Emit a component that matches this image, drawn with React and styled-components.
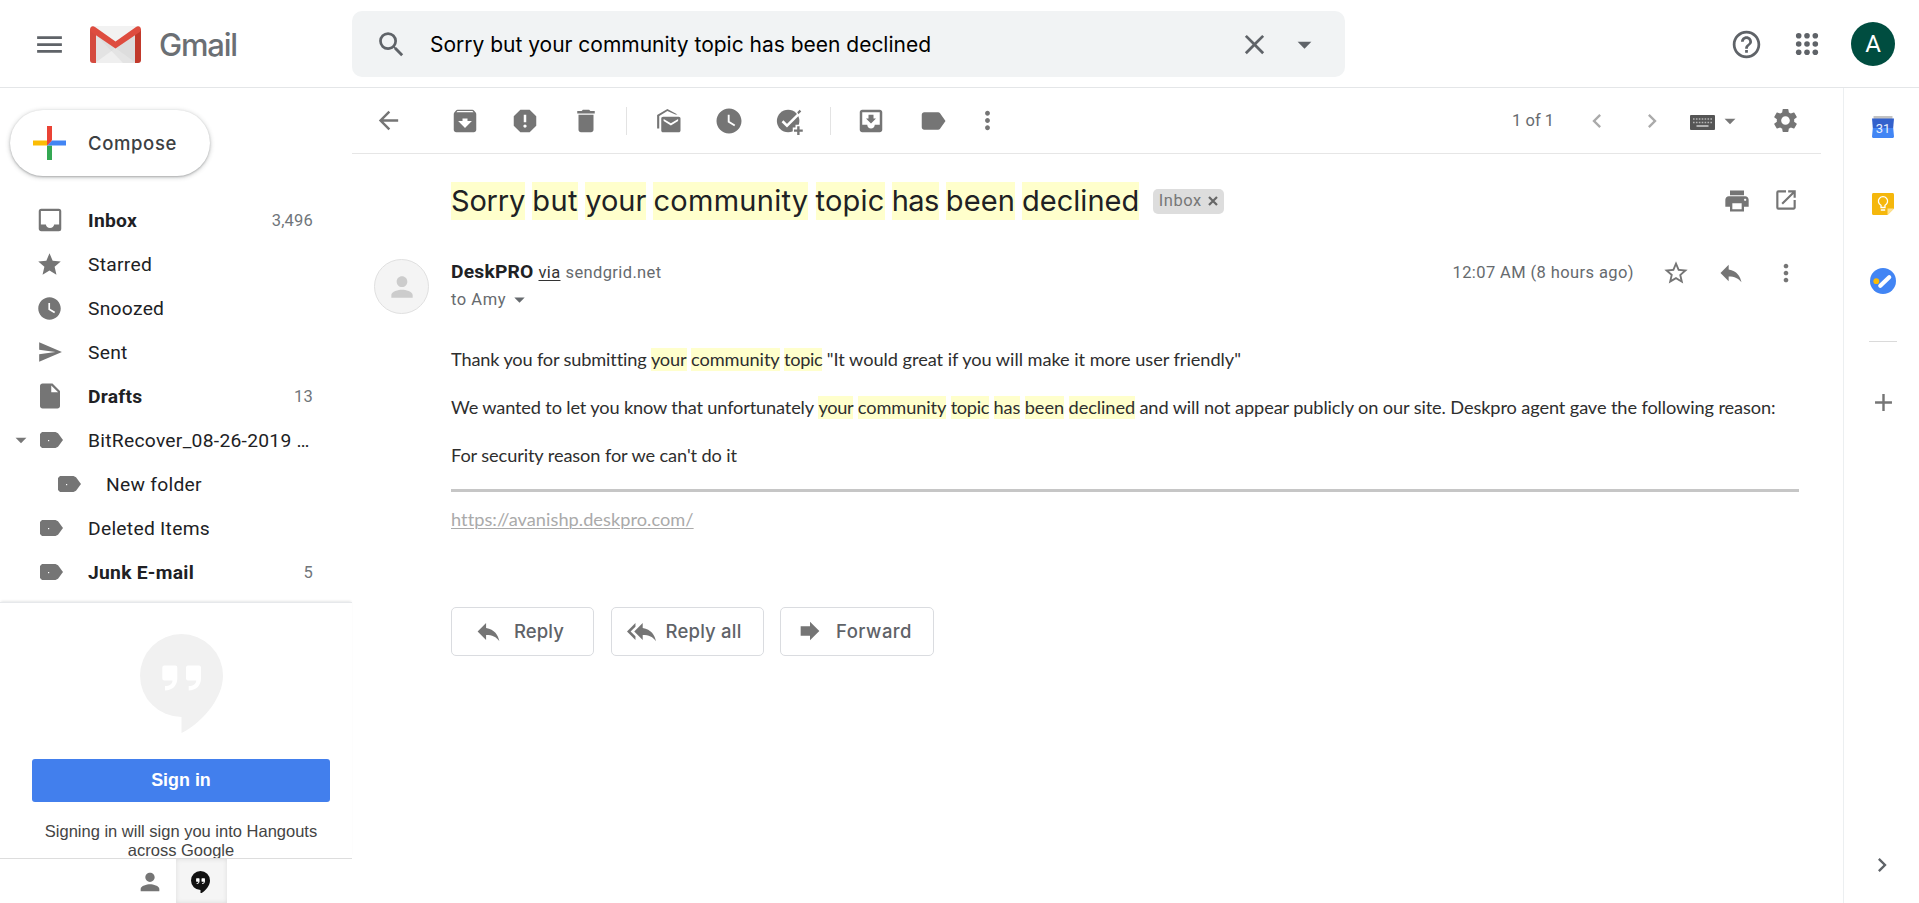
import React, { useLayoutEffect, useRef, useState } from 'react';
import styled, { createGlobalStyle } from 'styled-components';
import {
  MdMenu, MdSearch, MdClose, MdArrowDropDown, MdHelpOutline, MdArrowBack, MdArchive, MdReport,
  MdDelete, MdWatchLater, MdMoveToInbox, MdLabel, MdMoreVert, MdChevronLeft, MdChevronRight,
  MdSettings, MdPrint, MdOpenInNew, MdStarBorder, MdReply, MdReplyAll, MdForward,
  MdStar, MdSend, MdInsertDriveFile, MdPerson, MdAdd,
} from 'react-icons/md';

const sans = `Roboto, "Liberation Sans", sans-serif`;
const display = `Inter, Roboto, sans-serif`;
const humanist = `Lato, "Open Sans", sans-serif`;

const Global = createGlobalStyle`
  * { box-sizing: border-box; }
  html, body { margin: 0; background: #fff; }
  body { font-family: ${sans}; overflow: hidden; }
  svg { display: block; flex: none; }
`;

/* Spreads a run of text over a given width through letter-spacing. */
const Run = styled.span`
  display: inline-block;
  white-space: nowrap;
  flex: none;
`;
function Fit({ width, children, as: Tag = Run }) {
  const ref = useRef(null);
  const [spacing, setSpacing] = useState(0);
  useLayoutEffect(() => {
    const natural = ref.current.getBoundingClientRect().width;
    setSpacing((width - natural) / String(children).length);
  }, [width, children]);
  return <Tag ref={ref} style={{ letterSpacing: `${spacing}px` }}>{children}</Tag>;
}

const Page = styled.div`
  width: 100vw;
  height: 903px;
  display: flex;
  flex-direction: column;
  overflow: hidden;
`;

/* Header */
const Header = styled.header`
  height: 88px;
  flex: none;
  display: flex;
  align-items: center;
  border-bottom: 1px solid #e4e6e8;
  color: #5f6368;
  padding: 1px 24px 0 33px;
`;
const Brand = styled.div`
  display: flex;
  align-items: center;
  width: 319px;
  & > svg:first-child { margin-right: 24px; }
`;
const BrandName = styled.div`
  margin: 2px 0 0 18px;
  font: 500 31px/40px ${display};
  color: #6b6f74;
`;
const SearchBox = styled.div`
  width: 993px;
  height: 66px;
  border-radius: 10px;
  background: #f1f3f4;
  display: flex;
  align-items: center;
  padding: 0 24px 0 23px;
`;
const Query = styled.div`
  flex: 1;
  margin: 2px 0 0 22px;
  font: 400 21px/30px ${display};
  color: #000;
`;
const SearchActions = styled.div`
  display: flex;
  gap: 17px;
`;
const HeaderActions = styled.div`
  margin-left: auto;
  display: flex;
  align-items: center;
`;
const AppsSlot = styled.div`
  margin: 0 32px;
`;
const Account = styled.div`
  width: 44px;
  height: 44px;
  border-radius: 50%;
  background: #004d40;
  color: #fff;
  font: 400 24px/45px ${sans};
  text-align: center;
`;

const Columns = styled.div`
  flex: 1;
  min-height: 0;
  display: flex;
`;

/* Sidebar */
const Sidebar = styled.aside`
  width: 352px;
  flex: none;
  display: flex;
  flex-direction: column;
`;
const Compose = styled.div`
  width: 200px;
  height: 66px;
  margin: 22px 0 22px 10px;
  flex: none;
  border-radius: 33px;
  background: #fff;
  box-shadow: 0 1px 2px rgba(60, 64, 67, 0.3), 0 1px 4px 1px rgba(60, 64, 67, 0.2);
  display: flex;
  align-items: center;
  padding: 0 0 1px 23px;
  gap: 22px;
  font: 500 18.5px/30px ${display};
  color: #3c4043;
`;
const Nav = styled.nav`
  height: 404px;
  flex: none;
`;
const NavItem = styled.div`
  height: 44px;
  display: flex;
  align-items: center;
  padding: 0 39px 0 ${(p) => (p.$nested ? 52 : 34)}px;
  font-size: 19.25px;
  letter-spacing: 0.275px;
  font-weight: ${(p) => (p.$unread ? 700 : 400)};
  color: #202124;
`;
const NavIcon = styled.span`
  width: 32px;
  height: 30px;
  display: flex;
  align-items: center;
  justify-content: center;
  padding: ${(p) => (p.$folder ? '0 0 0 3px' : '0 1px 0 0')};
  color: #757575;
`;
const NavText = styled.span`
  flex: 1;
  margin-left: 22px;
  white-space: nowrap;
`;
const NavCount = styled.span`
  font-size: 16.5px;
  font-weight: 400;
  letter-spacing: 0.2px;
  color: #70757a;
`;
const NavCaret = styled.span`
  width: 26px;
  margin: 0 0 0 -26px;
  color: #777;
`;

const Chat = styled.section`
  flex: 1;
  min-height: 0;
  display: flex;
  flex-direction: column;
  align-items: center;
  border-top: 1px solid #e6e8eb;
  box-shadow: 0 -2px 2px -1px rgba(60, 64, 67, 0.12);
  padding: 31px 0 0 10px;
  overflow: hidden;
`;
const SignIn = styled.div`
  width: 298px;
  height: 43px;
  flex: none;
  margin: 26px 0 20px;
  border-radius: 3px;
  background: #427fed;
  color: #fff;
  font: 700 17.9px/43px "Liberation Sans", Arial, sans-serif;
  text-align: center;
`;
const SignInNote = styled.div`
  width: 290px;
  font: 400 16.5px/19.2px "Liberation Sans", Arial, sans-serif;
  text-align: center;
  color: #444;
`;
const ChatTabs = styled.div`
  height: 45px;
  flex: none;
  border-top: 1px solid #ddd;
  background: #fff;
  display: flex;
  padding-left: 125px;
`;
const ChatTab = styled.div`
  width: 51px;
  display: flex;
  justify-content: center;
  align-items: center;
  padding: 2px 2px 0 0;
  color: #757575;
  background: ${(p) => (p.$active ? '#f5f5f5' : 'none')};
  box-shadow: ${(p) => (p.$active ? 'inset 0 0 5px rgba(0,0,0,0.1)' : 'none')};
`;

/* Message pane */
const Main = styled.main`
  flex: 1;
  min-width: 0;
`;
const Toolbar = styled.div`
  height: 66px;
  margin-right: 22px;
  border-bottom: 1px solid #e6e6e6;
  display: flex;
  align-items: center;
  padding-left: 21.5px;
  color: #757575;
`;
const ToolGroup = styled.div`
  display: flex;
  gap: ${(p) => p.$gap || 30.5}px;
  margin-left: ${(p) => p.$left}px;
`;
const ToolDivider = styled.div`
  width: 1px;
  height: 28px;
  background: #e3e3e3;
  margin-left: 25px;
`;
const Paging = styled.div`
  margin-left: auto;
  display: flex;
  align-items: center;
  padding-right: 21px;
`;
const PageCount = styled.span`
  font-size: 16.5px;
  color: #666a6e;
  margin-right: 29px;
`;
const Pagers = styled.div`
  display: flex;
  gap: 27px;
  color: #aaa;
`;
const InputTools = styled.div`
  display: flex;
  align-items: center;
  margin: 0 28px 0 24px;
  color: #555;
  & > svg:first-child { margin-top: 4px; }
  & > svg + svg { margin-left: 2px; color: #777; }
`;

const SubjectRow = styled.div`
  height: 94px;
  padding: 0 44px 0 99px;
  display: flex;
  align-items: center;
`;
const Subject = styled.h1`
  margin: 0;
  display: flex;
  gap: 7.15px;
  font: 400 29px/38px ${display};
  color: #202124;
`;
const Mark = styled.mark`
  display: inline-block;
  white-space: nowrap;
  flex: none;
  background: #ffffcc;
  color: inherit;
`;
const Chip = styled.div`
  width: 71px;
  height: 25px;
  margin-left: 14px;
  border-radius: 5px;
  background: #ddd;
  color: #777;
  display: flex;
  align-items: center;
  padding: 0 0 1px 5.5px;
  gap: 6px;
  font-size: 16.5px;
`;
const RowActions = styled.div`
  margin-left: auto;
  display: flex;
  gap: ${(p) => p.$gap}px;
  color: #757575;
`;

const SenderRow = styled.div`
  height: 68px;
  padding: 11px 43px 0 22px;
  display: flex;
  align-items: flex-start;
`;
const Photo = styled.div`
  width: 55px;
  height: 55px;
  border-radius: 50%;
  border: 1px solid #e0e0e0;
  background: #f4f4f4;
  color: #ccc;
  display: flex;
  align-items: center;
  justify-content: center;
`;
const Sender = styled.div`
  margin: -1px 0 0 22px;
`;
const FromLine = styled.div`
  display: flex;
  align-items: baseline;
  gap: 5px;
  font-size: 16.5px;
  line-height: 27px;
  color: #666a6e;
  b { font-size: 19.25px; color: #202124; }
`;
const Via = styled(Run)`
  color: #333;
  text-decoration: underline;
  text-decoration-thickness: 1px;
  text-underline-offset: 2px;
`;
const ToLine = styled.div`
  display: flex;
  align-items: center;
  gap: 1px;
  font-size: 16.5px;
  line-height: 27px;
  color: #666a6e;
`;
const SentAt = styled.span`
  line-height: 28px;
  font-size: 16.5px;
  color: #666a6e;
  white-space: nowrap;
  margin-right: 1px;
`;

const Body = styled.div`
  padding: 19px 44px 0 99px;
  font: 400 18.2px/23px ${humanist};
  color: #2e2e2e;
`;
const Line = styled.p`
  margin: 0;
  height: 48px;
  display: flex;
  align-items: center;
  gap: 4.4px;
`;
const Rule = styled.hr`
  height: 3px;
  margin: 10px 0 16px;
  border: 0;
  background: #c6c6c6;
`;
const SiteLink = styled.a`
  display: inline-block;
  color: #aaa;
  text-decoration: underline;
  text-decoration-thickness: 1px;
  text-underline-offset: 2px;
`;

const Replies = styled.div`
  display: flex;
  padding: 76px 0 0 99px;
`;
const ReplyButton = styled.div`
  width: ${(p) => p.$width}px;
  height: 49px;
  margin-right: ${(p) => p.$after || 0}px;
  border: 1px solid #dadce0;
  border-radius: 5px;
  display: flex;
  align-items: center;
  padding: 0 0 1px ${(p) => p.$pad}px;
  gap: ${(p) => p.$gap}px;
  font: 500 18.5px/30px ${display};
  color: #5f6368;
  svg { color: #757575; }
`;

/* Add-on rail */
const Rail = styled.aside`
  width: 76px;
  flex: none;
  border-left: 1px solid #eceff1;
  display: flex;
  flex-direction: column;
  align-items: center;
  padding: 28px 0 24px 3px;
  color: #757575;
`;
const RailGap = styled.div`
  height: ${(p) => (p.$small ? 53 : 55)}px;
  flex: none;
`;
const RailDivider = styled.div`
  width: 28px;
  height: 1px;
  margin: 47px 0 46px;
  background: #dadada;
`;
const RailToggle = styled.div`
  margin-top: auto;
  padding-right: 2px;
  color: #5f6368;
`;

const GmailLogo = () => (
  <svg width="51" height="37" viewBox="0 0 51 37">
    <rect x="1" width="49" height="37" rx="2.5" fill="#e3e3e3" />
    <path d="M5 37 25.500 22 46 37z" fill="#efefef" />
    <path d="M3 0h45L25.500 17z" fill="#f2f2f2" />
    <path d="M5 8 33 37H46V8L25.500 22z" fill="#d0d0d0" opacity=".35" />
    <path d="M0 3v31a3 3 0 0 0 3 3h3V8z" fill="#d54b3f" />
    <path d="M51 3v31a3 3 0 0 1-3 3h-3V8z" fill="#c1392b" />
    <path d="M0 3.500C0 .3 3-.7 5 .9L25.500 15.500 46 .9c2-1.600 5-.6 5 2.600 0 1-.4 1.800-1.200 2.500L25.500 22.500 1.200 6C.4 5.300 0 4.500 0 3.500z" fill="#de4c3f" />
  </svg>
);
const AppsIcon = () => (
  <svg width="24" height="24" viewBox="0 0 24 24" fill="currentColor">
    {[3.700, 12, 20.300].map((y) => [3.700, 12, 20.300].map((x) => <circle key={`${x}-${y}`} cx={x} cy={y} r="2.800" />))}
  </svg>
);
const ComposePlus = () => (
  <svg width="33" height="34" viewBox="0 0 33 34">
    <path d="M14 0h5v14l-5 5z" fill="#ea4335" />
    <path d="M0 14.500h14V19.500H0z" fill="#fbbc04" />
    <path d="M14 19.500V34h5V19.500z" fill="#34a853" />
    <path d="M19 14.500h14v5H14z" fill="#4285f4" />
    <path d="M14 14.500h5l-5 5z" fill="#ea4335" />
  </svg>
);
const MarkUnreadIcon = () => (
  <svg width="30" height="30" viewBox="0 0 24 24" fill="currentColor">
    <path d="M2.500 18V7.200L10.700 2.300l8.100 4.500-1.700 0L10.700 4 4.200 8V18z" />
    <path fillRule="evenodd" d="M7.300 8.500h12.400c.9 0 1.500.6 1.500 1.500v9.500c0 .9-.6 1.500-1.500 1.500H7.300c-.9 0-1.500-.6-1.500-1.500V10c0-.9.600-1.500 1.500-1.500zM19.300 10.300v1.600l-5.800 3.600-5.800-3.600v-1.600l5.800 3.500z" />
  </svg>
);
const AddTaskIcon = () => (
  <svg width="30" height="30" viewBox="0 0 24 24">
    <circle cx="10.500" cy="12" r="9" fill="currentColor" />
    <path d="M6 12.200l3.600 3.600L20.500 4.900" fill="none" stroke="#fff" strokeWidth="2" />
    <path d="M17.800 4.900l1.900-1.900 1.300 1.300-2.300 2.300z" fill="currentColor" />
    <path d="M18.700 15v9M14.200 19.500h9" stroke="#fff" strokeWidth="4.600" />
    <path d="M18.700 16.200v7M15.200 19.700h7" stroke="currentColor" strokeWidth="1.900" />
  </svg>
);
const KeyboardIcon = () => (
  <svg width="25" height="15" viewBox="0 0 25 15">
    <rect width="25" height="15" rx="1" fill="#555" />
    <path d="M3 4h19M3 7.500h19" stroke="#b5b5b5" strokeWidth="1.600" strokeDasharray="1.600 1.300" />
    <path d="M6.500 11h12" stroke="#c8c8c8" strokeWidth="1.600" />
  </svg>
);
const InboxIcon = () => (
  <svg width="30" height="30" viewBox="0 0 24 24" fill="currentColor">
    <path d="M19 3H5a2 2 0 0 0-2 2v14c0 1.100.9 2 2 2h14a2 2 0 0 0 2-2V5a2 2 0 0 0-2-2zm.3 12.500h-4c0 1.500-1.600 2.800-3.300 2.800s-3.300-1.300-3.300-2.800h-4V4.700h14.600z" />
  </svg>
);
const FolderIcon = () => (
  <svg width="23" height="16" viewBox="0 0 23 16">
    <path d="M2 0H15.500L18 1.200 23 8 18 14.800 15.500 16H2L0 14V2z" fill="#757575" />
    <rect x="8" y="8" width="1.200" height="1.200" fill="#fff" />
  </svg>
);
const RemoveIcon = () => (
  <svg width="10" height="10" viewBox="0 0 10 10">
    <path d="M1 1l8 8M9 1L1 9" stroke="#666" strokeWidth="2.200" />
  </svg>
);
const HangoutsIcon = ({ width, fill }) => (
  <svg width={width} height={width * 1.193} viewBox="0 0 83 99">
    <path d="M41.500 0A41.500 41.500 0 0 0 41.500 83V99C60 90 83 66 83 41.500A41.500 41.500 0 0 0 41.500 0Z" fill={fill} />
    <g fill="#fff">
      <path d="M24.300 31.600h11a2 2 0 0 1 2 2v11c0 7-5 12-12.300 12v-4.500c4.500 0 7.500-2 7.500-5.500h-8.200a2 2 0 0 1-2-2v-11a2 2 0 0 1 2-2z" />
      <path d="M48 31.600h11a2 2 0 0 1 2 2v11c0 7-5 12-12.300 12v-4.500c4.500 0 7.500-2 7.500-5.500H48a2 2 0 0 1-2-2v-11a2 2 0 0 1 2-2z" />
    </g>
  </svg>
);
const CalendarIcon = () => (
  <svg width="22" height="22" viewBox="0 0 22 22">
    <path d="M1.500 0h19v4h-19z" fill="#c2c2c2" />
    <path d="M0 2.500h22l-.8 9.500H.8z" fill="#3361cc" />
    <path d="M.8 12h20.400L22 20.500c0 .9-.6 1.500-1.500 1.500h-19C.6 22 0 21.400 0 20.500z" fill="#4285f4" />
    <text x="11" y="17.300" fontFamily="Roboto, sans-serif" fontSize="13" fill="#e8f0fe" textAnchor="middle">31</text>
  </svg>
);
const KeepIcon = () => (
  <svg width="22" height="22" viewBox="0 0 22 22">
    <path d="M1.500 0h19c.9 0 1.500.6 1.500 1.500V15.500L15.500 22h-14C.6 22 0 21.400 0 20.500v-19C0 .6.600 0 1.500 0z" fill="#f5b70c" />
    <path d="M22 15.500 15.500 22v-6.500z" fill="#fde293" />
    <path d="M9 14.500v-2.200a4.600 4.600 0 1 1 4 0v2.200zM8.800 17h4.400" fill="none" stroke="#fff" strokeWidth="1.300" />
  </svg>
);
const TasksIcon = () => (
  <svg width="26" height="26" viewBox="0 0 26 26">
    <circle cx="13" cy="13" r="13" fill="#4285f4" />
    <path d="M10.300 17.700 19.200 9.200" stroke="#fff" strokeWidth="4.200" strokeLinecap="round" />
    <circle cx="6.300" cy="13.200" r="2.900" fill="#fbbc04" />
  </svg>
);

const folders = [
  { name: 'Inbox', icon: <InboxIcon />, count: '3,496', unread: true },
  { name: 'Starred', icon: <MdStar size={27} /> },
  { name: 'Snoozed', icon: <MdWatchLater size={27} /> },
  { name: 'Sent', icon: <MdSend size={26} /> },
  { name: 'Drafts', icon: <MdInsertDriveFile size={30} />, count: '13', unread: true },
  { name: 'BitRecover_08-26-2019 …', folder: true, open: true },
  { name: 'New folder', folder: true, nested: true },
  { name: 'Deleted Items', folder: true },
  { name: 'Junk E-mail', folder: true, count: '5', unread: true },
];

const subject = [
  ['Sorry', 74], ['but', 46], ['your', 61], ['community', 155],
  ['topic', 69], ['has', 47], ['been', 69], ['declined', 117.3],
];

export default function App() {
  return (
    <Page>
      <Global />
      <Header>
        <Brand>
          <MdMenu size={33} />
          <GmailLogo />
          <BrandName><Fit width={78}>Gmail</Fit></BrandName>
        </Brand>
        <SearchBox>
          <MdSearch size={33} />
          <Query><Fit width={501}>Sorry but your community topic has been declined</Fit></Query>
          <SearchActions>
            <MdClose size={33} />
            <MdArrowDropDown size={33} />
          </SearchActions>
        </SearchBox>
        <HeaderActions>
          <MdHelpOutline size={33} />
          <AppsSlot><AppsIcon /></AppsSlot>
          <Account>A</Account>
        </HeaderActions>
      </Header>
      <Columns>
        <Sidebar>
          <Compose>
            <ComposePlus />
            <Fit width={89}>Compose</Fit>
          </Compose>
          <Nav>
            {folders.map((f) => (
              <NavItem key={f.name} $nested={f.nested} $unread={f.unread}>
                {f.open && <NavCaret><MdArrowDropDown size={26} /></NavCaret>}
                <NavIcon $folder={f.folder}>{f.folder ? <FolderIcon /> : f.icon}</NavIcon>
                <NavText>{f.name}</NavText>
                {f.count && <NavCount>{f.count}</NavCount>}
              </NavItem>
            ))}
          </Nav>
          <Chat>
            <HangoutsIcon width={83} fill="#f1f1f1" />
            <SignIn>Sign in</SignIn>
            <SignInNote>Signing in will sign you into Hangouts across Google</SignInNote>
          </Chat>
          <ChatTabs>
            <ChatTab><MdPerson size={28} /></ChatTab>
            <ChatTab $active><HangoutsIcon width={19} fill="#111" /></ChatTab>
          </ChatTabs>
        </Sidebar>

        <Main>
          <Toolbar>
            <MdArrowBack size={29} />
            <ToolGroup $left={47}>
              <MdArchive size={30} />
              <MdReport size={30} />
              <MdDelete size={30} />
            </ToolGroup>
            <ToolDivider />
            <ToolGroup $left={27}>
              <MarkUnreadIcon />
              <MdWatchLater size={30} />
              <AddTaskIcon />
            </ToolGroup>
            <ToolDivider />
            <ToolGroup $left={25.5} $gap={31.5}>
              <MdMoveToInbox size={30} />
              <MdLabel size={30} />
            </ToolGroup>
            <ToolGroup $left={25}><MdMoreVert size={29} /></ToolGroup>
            <Paging>
              <PageCount>1 of 1</PageCount>
              <Pagers>
                <MdChevronLeft size={28} />
                <MdChevronRight size={28} />
              </Pagers>
              <InputTools>
                <KeyboardIcon />
                <MdArrowDropDown size={26} />
              </InputTools>
              <MdSettings size={29} />
            </Paging>
          </Toolbar>

          <SubjectRow>
            <Subject>
              {subject.map(([word, width]) => <Fit key={word} as={Mark} width={width}>{word}</Fit>)}
            </Subject>
            <Chip>
              <Fit width={43}>Inbox</Fit>
              <RemoveIcon />
            </Chip>
            <RowActions $gap={22}>
              <MdPrint size={28} />
              <MdOpenInNew size={26} />
            </RowActions>
          </SubjectRow>

          <SenderRow>
            <Photo><MdPerson size={32} /></Photo>
            <Sender>
              <FromLine>
                <b><Fit width={82.500}>DeskPRO</Fit></b>
                <Fit as={Via} width={22}>via</Fit>
                <Fit width={96}>sendgrid.net</Fit>
              </FromLine>
              <ToLine><Fit width={55}>to Amy</Fit><MdArrowDropDown size={25} /></ToLine>
            </Sender>
            <RowActions $gap={27}>
              <SentAt><Fit width={181.500}>12:07 AM (8 hours ago)</Fit></SentAt>
              <MdStarBorder size={28} />
              <MdReply size={28} />
              <MdMoreVert size={28} />
            </RowActions>
          </SenderRow>

          <Body>
            <Line>
              <Fit width={195}>Thank you for submitting</Fit>
              <Fit as={Mark} width={35.700}>your</Fit>
              <Fit as={Mark} width={88.700}>community</Fit>
              <Fit as={Mark} width={38.400}>topic</Fit>
              <Fit width={414}>"It would great if you will make it more user friendly"</Fit>
            </Line>
            <Line>
              <Fit width={363}>We wanted to let you know that unfortunately</Fit>
              <Fit as={Mark} width={35}>your</Fit>
              <Fit as={Mark} width={88.500}>community</Fit>
              <Fit as={Mark} width={38.500}>topic</Fit>
              <Fit as={Mark} width={26.700}>has</Fit>
              <Fit as={Mark} width={39.500}>been</Fit>
              <Fit as={Mark} width={66.500}>declined</Fit>
              <Fit width={636}>and will not appear publicly on our site. Deskpro agent gave the following reason:</Fit>
            </Line>
            <Line><Fit width={286}>For security reason for we can't do it</Fit></Line>
            <Rule />
            <Fit as={SiteLink} width={242}>https://avanishp.deskpro.com/</Fit>
          </Body>

          <Replies>
            <ReplyButton $width={143} $after={17} $pad={22} $gap={11}><MdReply size={29} /><Fit width={50}>Reply</Fit></ReplyButton>
            <ReplyButton $width={153} $after={16} $pad={14.5} $gap={10}><MdReplyAll size={29} /><Fit width={76}>Reply all</Fit></ReplyButton>
            <ReplyButton $width={154} $pad={15} $gap={12}><MdForward size={28} /><Fit width={76}>Forward</Fit></ReplyButton>
          </Replies>
        </Main>

        <Rail>
          <CalendarIcon />
          <RailGap />
          <KeepIcon />
          <RailGap $small />
          <TasksIcon />
          <RailDivider />
          <MdAdd size={29} />
          <RailToggle><MdChevronRight size={28} /></RailToggle>
        </Rail>
      </Columns>
    </Page>
  );
}
